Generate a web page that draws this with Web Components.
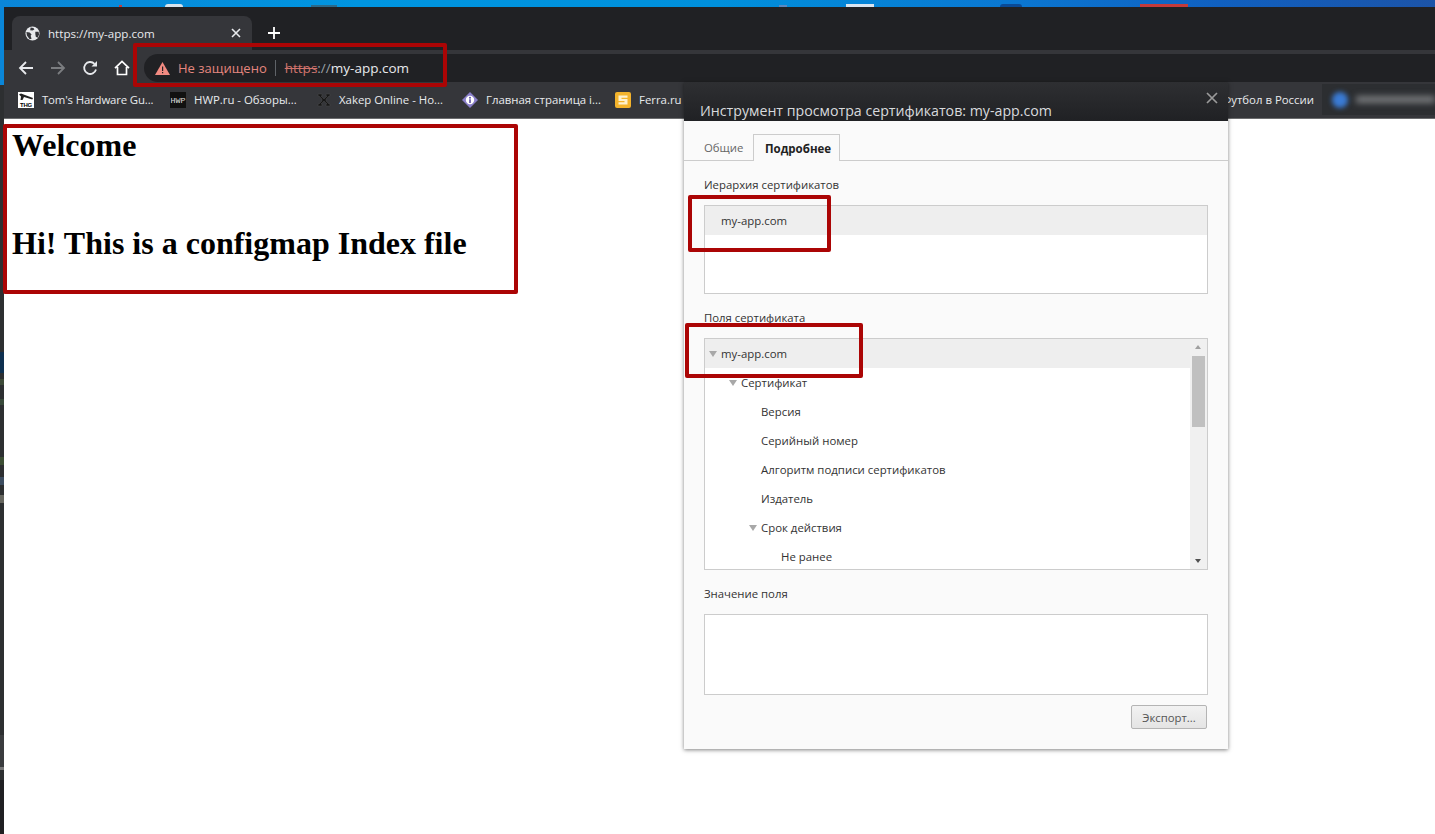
<!DOCTYPE html>
<html><head><meta charset="utf-8"><style>
html,body{margin:0;padding:0;height:100%;overflow:hidden;background:#fff}
</style></head><body>
<screen-shot></screen-shot>
<script>
const UI='"Open Sans","Noto Sans",sans-serif';
function el(name,css,html){customElements.define(name,class extends HTMLElement{constructor(){super();const r=this.attachShadow({mode:'open'});r.innerHTML='<style>'+css+'</style>'+html;}});}

el('tab-strip',`:host{display:flex;height:43px;background:#202124;padding-left:8px;box-sizing:border-box;align-items:flex-end;color:#e8eaed;font:11.600px ${UI}}
.tab{width:240px;height:34px;background:#35363a;border-radius:8px 8px 0 0;display:flex;align-items:center;padding:0 11px 0 13px;box-sizing:border-box;gap:8px}
.t{flex:1;white-space:nowrap}
.plus{margin:0 0 0 16px;height:34px;display:flex;align-items:center}`,
`<div class="tab"><svg width="15" height="15" viewBox="0 0 16 16"><circle cx="8" cy="8" r="7.500" fill="#e8eaed"/><path d="M1.500 6.500 5 7l2 2-1 1.500 1 3L5 14 2 10zM6 1.500l3 .5 1 1.600-2 1.300-2.500-.5zM11 6h3.500l.5 3-1.500 3.500-2-1-.5-3z" fill="#35363a"/></svg><span class="t">https://my-app.com</span><svg width="10" height="10" viewBox="0 0 10 10"><path d="M1 1l8 8M9 1l-8 8" stroke="#e8eaed" stroke-width="1.600"/></svg></div>
<div class="plus"><svg width="12" height="12" viewBox="0 0 12 12"><path d="M6 0v12M0 6h12" stroke="#fff" stroke-width="1.800"/></svg></div>`);

el('tool-bar',`:host{display:flex;height:34px;background:#35363a;box-sizing:border-box;font:13px ${UI}}
.nav{width:140px;display:flex;align-items:center;padding:2px 0 0 14px;box-sizing:border-box;gap:16px;height:34px}
.omni-wrap{flex:1;background:#202124;margin-top:4px;height:28px;border-radius:14px 0 0 14px;display:flex;align-items:center;padding-left:11px;gap:8px;color:#e5877f;white-space:nowrap}
.sep{width:1px;height:16px;background:#5f6368;margin:0 1px 0 0}
.url{font-size:13.500px}
.u{color:#e8eaed}.g{color:#9aa0a6}.s{color:#d0736c;text-decoration:line-through}
.nav svg{flex:none}`,
`<div class="nav"><svg width="16" height="16" viewBox="0 0 16 16"><path d="M15 8H2M8 2L2 8l6 6" fill="none" stroke="#e8eaed" stroke-width="1.800"/></svg>
<svg width="16" height="16" viewBox="0 0 16 16"><path d="M1 8h13M8 2l6 6-6 6" fill="none" stroke="#7b7d80" stroke-width="1.800"/></svg>
<svg width="16" height="16" viewBox="0 0 16 16"><path d="M14 9.500A6 6 0 1 1 12.500 3.800" fill="none" stroke="#e8eaed" stroke-width="1.800"/><path d="M15 1v5.500H9.500z" fill="#e8eaed"/></svg>
<svg width="16" height="16" viewBox="0 0 16 16"><path d="M1 8.200L8 1.500l7 6.700M3.500 7v7.500h9V7" fill="none" stroke="#fff" stroke-width="1.700"/></svg></div>
<div class="omni-wrap"><svg width="15" height="13" viewBox="0 0 15 13"><path d="M7.500 0L15 13H0z" fill="#f28b82"/><path d="M7 4.500h1.200v4.500H7zM7 10h1.200v1.300H7z" fill="#202124"/></svg>
<span>Не защищено</span><span class="sep"></span><span class="url"><span class="s">https</span><span class="g">://</span><span class="u">my-app.com</span></span></div>`);

el('book-mark',`:host{display:inline-flex;align-items:center;gap:8px;white-space:nowrap;flex:none;box-sizing:border-box}`,`<slot name="i"></slot><slot></slot>`);

el('book-bar',`:host{display:flex;height:35px;background:#35363a;border-bottom:1px solid #6b6c6e;box-sizing:border-box;padding:0 0 3px 14px;align-items:center;color:#e8eaed;font:11.400px ${UI};overflow:hidden}
.r{margin-left:auto;display:flex;align-items:center;height:100%}
.b{width:16px;height:16px;border-radius:50%;background:#3a7bd5;filter:blur(2.500px);margin:0 8px 0 10px;flex:none}
.bt{width:79px;height:7px;background:#77797c;filter:blur(3px);flex:none}
.bw{display:flex;align-items:center;height:100%;background:#2c2e31;width:113px;margin-left:8px;overflow:hidden}`,
`<book-mark style="width:152px;letter-spacing:-.15px"><svg slot="i" width="16" height="16" viewBox="0 0 16 16"><rect width="16" height="16" fill="#fff"/><path d="M1 2.500l2-1 4 1.500 8 3-.7 1.500L6 5 4.500 8H2.500l.5-3.500z" fill="#222"/><text x="8" y="15" font-family="Liberation Sans" font-size="6" font-weight="700" text-anchor="middle" fill="#000">THG</text></svg>Tom's Hardware Gu...</book-mark>
<book-mark style="width:147px"><svg slot="i" width="16" height="16" viewBox="0 0 16 16"><rect width="16" height="16" fill="#111"/><text x="8" y="11" font-family="Liberation Mono" font-size="7" textLength="15" lengthAdjust="spacingAndGlyphs" text-anchor="middle" fill="#ddd">HWP</text></svg>HWP.ru - Обзоры...</book-mark>
<book-mark style="width:145px"><svg slot="i" width="14" height="14" viewBox="0 0 14 14"><path d="M1 1h4v2H4l3 3 3-3H9V1h4v2h-1L9 6v2l3 3h1v2H9v-2h1L7 8l-3 3h1v2H1v-2h1l3-3V6L2 3H1z" fill="#171717" stroke="#4a4a4a" stroke-width=".5"/></svg>Xakep Online - Но...</book-mark>
<book-mark style="width:153px"><svg slot="i" width="16" height="16" viewBox="0 0 16 16"><path d="M8 0l8 8-8 8-8-8z" fill="#8a7fc9"/><circle cx="8" cy="8" r="4.200" fill="#fff"/><circle cx="8" cy="5.800" r="1" fill="#5b4fa0"/><path d="M7.200 7.300h1.600v3.700H7.200z" fill="#5b4fa0"/></svg>Главная страница i...</book-mark>
<book-mark><svg slot="i" width="16" height="16" viewBox="0 0 16 16"><rect width="16" height="16" rx="2" fill="#f3b32c"/><path d="M3.500 3.500h9v2.200h-6v1.400h6v5.400h-9v-2.200h6V8.900h-6z" fill="#fdf1cf"/></svg>Ferra.ru</book-mark>
<div class="r"><span>Футбол в России</span><div class="bw"><div class="b"></div><div class="bt"></div></div></div>`);

el('browser-chrome',`:host{display:block;background:#202124;flex:none}`,`<tab-strip></tab-strip><tool-bar></tool-bar><book-bar></book-bar>`);

el('web-page',`:host{display:block;flex:1;background:#fff;color:#000;font-family:"Liberation Serif",serif;padding:8px 8px 0 8px;overflow:hidden}
h1{font-size:32px;line-height:36px;margin:0;font-weight:bold;white-space:nowrap}
h1+h1{margin-top:62px}`,`<h1>Welcome</h1><h1>Hi! This is a configmap Index file</h1>`);

el('tree-row',`:host{display:flex;align-items:center;height:29px;font:11.400px ${UI};color:#333;white-space:nowrap;box-sizing:border-box}
:host([sel]){background:#eee}
.a{width:0;height:0;border:4.500px solid transparent;border-top:6px solid #a8a8a8;border-bottom:0;margin-right:4px;margin-left:-13px}
:host(:not([open])) .a{visibility:hidden}`,`<span class="a"></span><slot></slot>`);

el('cert-dialog',`:host{position:absolute;left:684px;top:82px;width:544px;height:667px;background:#fafafa;box-shadow:0 1px 4px rgba(0,0,0,.5);display:flex;flex-direction:column;font:11.350px ${UI};color:#333;box-sizing:border-box;z-index:2}
.h{height:39px;background:linear-gradient(#2e2f32,#202124);color:#d8dadd;font-size:14.200px;display:flex;align-items:flex-end;padding:0 0 1px 16px;box-sizing:border-box;position:relative;white-space:nowrap;flex:none}
.x{position:absolute;right:10px;top:10px}
.tabs{display:flex;height:26px;margin-top:13px;border-bottom:1px solid #ccc;padding-left:8px;flex:none;box-sizing:content-box}
.tabs div{display:flex;align-items:center}
.tabs .o{color:#666;width:37px;padding:1px 12px 0 12px;box-sizing:content-box}
.tabs .on{background:#fafafa;border:1px solid #ccc;border-bottom:0;font-weight:700;color:#222;box-sizing:border-box;margin-bottom:-1px;padding:0 9px 0 11px;height:27px;font-size:11.500px;width:87px}
.c{padding:0 20px;flex:1;display:flex;flex-direction:column}
.l{height:16px;line-height:16px;flex:none}
.box{border:1px solid #ccc;background:#fff;box-sizing:border-box;flex:none;position:relative;overflow:hidden}
.box tree-row{padding-left:17px}
.sb{position:absolute;right:0;top:0;bottom:0;width:17px;background:#f0f0f0}
.th{position:absolute;left:2px;right:2px;top:17px;height:71px;background:#c0c0c0}
.u,.d{position:absolute;left:5px;width:0;height:0;border:3.500px solid transparent}
.u{top:6px;border-bottom:4px solid #a0a0a0;border-top:0}
.d{bottom:6px;border-top:4px solid #505050;border-bottom:0}
.f{display:flex;justify-content:flex-end;margin-top:10px;padding-right:1px}
.btn{width:76px;height:24px;border:1px solid #b4b4b4;border-radius:2px;background:linear-gradient(#f2f2f2,#e4e4e4);display:flex;align-items:center;justify-content:center;color:#555;box-sizing:border-box}`,
`<div class="h">Инструмент просмотра сертификатов: my-app.com<svg class="x" width="12" height="12" viewBox="0 0 12 12"><path d="M1 1l10 10M11 1L1 11" stroke="#9a9a9a" stroke-width="1.700"/></svg></div>
<div class="tabs"><div class="o">Общие</div><div class="on">Подробнее</div></div>
<div class="c">
<div class="l" style="margin-top:16px">Иерархия сертификатов</div>
<div class="box" style="height:89px;margin-top:12px"><tree-row sel>my-app.com</tree-row></div>
<div class="l" style="margin-top:16px">Поля сертификата</div>
<div class="box" style="height:232px;margin-top:12px">
<tree-row sel open>my-app.com</tree-row>
<tree-row open style="padding-left:37px">Сертификат</tree-row>
<tree-row style="padding-left:57px">Версия</tree-row>
<tree-row style="padding-left:57px">Серийный номер</tree-row>
<tree-row style="padding-left:57px">Алгоритм подписи сертификатов</tree-row>
<tree-row style="padding-left:57px">Издатель</tree-row>
<tree-row open style="padding-left:57px">Срок действия</tree-row>
<tree-row style="padding-left:77px">Не ранее</tree-row>
<div class="sb"><i class="u"></i><i class="th"></i><i class="d"></i></div></div>
<div class="l" style="margin-top:16px">Значение поля</div>
<div class="box" style="height:81px;margin-top:12px"></div>
<div class="f"><div class="btn">Экспорт...</div></div>
</div>`);

el('red-box',`:host{position:absolute;border:4px solid #ab0505;border-radius:2px;box-sizing:border-box;z-index:3;pointer-events:none}`,``);

el('screen-shot',`:host{display:flex;flex-direction:column;width:1435px;height:834px;position:relative;overflow:hidden;background:#fff}
.top{height:7px;flex:none;background:linear-gradient(90deg,#0a86d8,#0095e0 25%,#0090dc 50%,#0a78d2 70%,#1060c0 85%,#1c54a8);position:relative}
.top i{position:absolute;display:block}
.main{flex:1;display:flex;min-height:0}
.left{width:4px;flex:none;background:linear-gradient(#0a86d8 0,#0a86d8 78px,#2d2f31 78px,#2d2f31 345px,#0e3050 345px,#0e3050 366px,#2d2f31 366px,#2d2f31 372px,#3d4a38 372px,#3d4a38 378px,#2d2f31 378px,#2d2f31 392px,#38493a 392px,#38493a 398px,#2d2f31 398px,#2d2f31 450px,#3c4e34 450px,#3c4e34 458px,#2d2f31 458px,#2d2f31 470px,#3d4d60 470px,#3d4d60 478px,#2d2f31 478px,#2d2f31 488px,#66665f 488px,#66665f 496px,#2d2f31 496px,#2d2f31 728px,#3a3c3e 728px,#3a3c3e 760px,#777 760px,#777 763px,#2d2f31 763px,#2d2f31 773px,#1f2022 773px)}
.w{flex:1;display:flex;flex-direction:column;min-width:0}`,
`<div class="top"><i style="left:119px;top:5px;width:3px;height:2px;background:#c43a3a"></i><i style="left:165px;top:4px;width:18px;height:3px;background:#d8e4ee;border-radius:9px 9px 0 0"></i><i style="left:311px;top:5px;width:26px;height:2px;background:#2b6a8a"></i><i style="left:779px;top:5px;width:8px;height:2px;background:#5a88c0"></i><i style="left:846px;top:4px;width:28px;height:3px;background:#d8e4f0"></i><i style="left:1000px;top:4px;width:22px;height:3px;background:#0a4a96;border-radius:11px 11px 0 0"></i><i style="left:1140px;top:4px;width:48px;height:3px;background:#c43a3a"></i></div>
<div class="main"><div class="left"></div><div class="w"><browser-chrome></browser-chrome><web-page></web-page></div></div>
<cert-dialog></cert-dialog>
<red-box style="left:133px;top:43px;width:314px;height:44px"></red-box>
<red-box style="left:3px;top:124px;width:515px;height:170px"></red-box>
<red-box style="left:688px;top:195px;width:143px;height:57px"></red-box>
<red-box style="left:685px;top:323px;width:178px;height:55px"></red-box>`);
</script></body></html>
